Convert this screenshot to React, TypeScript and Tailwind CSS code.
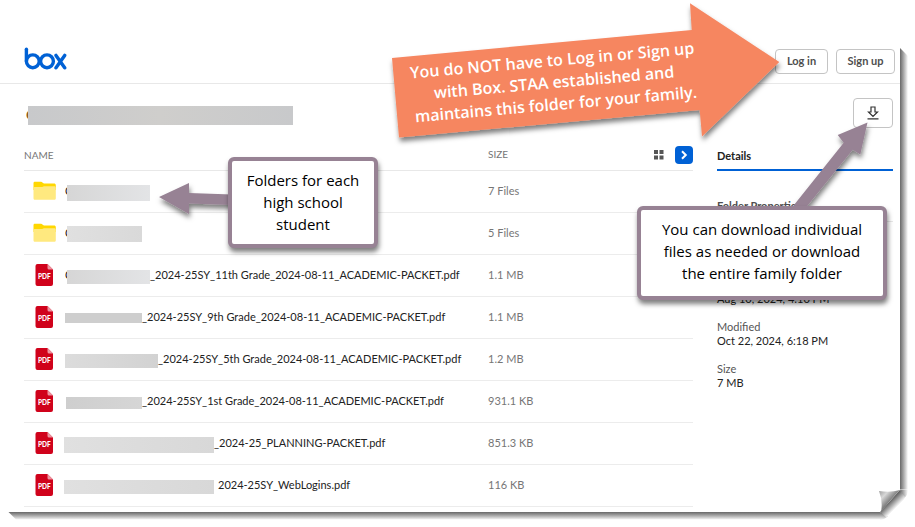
import type { ReactNode } from "react";

type Row = {
  kind: "folder" | "pdf";
  bar: string;
  peek?: boolean;
  label?: string;
  size: string;
};

const rows: Row[] = [
  { kind: "folder", bar: "mt-1 h-4 w-[83px] from-[#d6d6d6] to-[#e3e4e6]", peek: true, size: "7 Files" },
  { kind: "folder", bar: "mt-0.5 h-4 w-[75px] from-[#e0e0e0] to-[#d9d9d9]", peek: true, size: "5 Files" },
  { kind: "pdf", bar: "mt-1 h-3.5 w-[83px] from-[#d6d6d6] to-[#e3e4e6]", peek: true, label: "_2024-25SY_11th Grade_2024-08-11_ACADEMIC-PACKET.pdf", size: "1.1 MB" },
  { kind: "pdf", bar: "ml-px mt-0.5 h-2.5 w-[77px] from-[#cecece] to-[#cecece]", label: "_2024-25SY_9th Grade_2024-08-11_ACADEMIC-PACKET.pdf", size: "1.1 MB" },
  { kind: "pdf", bar: "ml-px mt-1 h-3.5 w-[93px] from-[#dcdcdc] to-[#d2d2d2]", label: "_2024-25SY_5th Grade_2024-08-11_ACADEMIC-PACKET.pdf", size: "1.2 MB" },
  { kind: "pdf", bar: "ml-0.5 mt-1 h-3 w-[76px] from-[#cecece] to-[#d6d6d6]", label: "_2024-25SY_1st Grade_2024-08-11_ACADEMIC-PACKET.pdf", size: "931.1 KB" },
  { kind: "pdf", bar: "mt-1 h-4 w-[150px] from-[#e0e0e0] to-[#d8d8d8]", label: "_2024-25_PLANNING-PACKET.pdf", size: "851.3 KB" },
  { kind: "pdf", bar: "mr-1 mt-1 h-3.5 w-[150px] from-[#e0e0e0] to-[#d8d8d8]", label: "2024-25SY_WebLogins.pdf", size: "116 KB" },
];

function BoxLogo() {
  return (
    <svg width="43" height="24" viewBox="24 47 43 24" fill="none" stroke="#0061d5" strokeWidth="3.4" strokeLinecap="round" aria-label="box">
      <path d="M26.4 49.2V61" />
      <circle cx="32.800" cy="61.300" r="6.400" />
      <circle cx="47" cy="61.300" r="6.400" />
      <path d="M56 55.400L64.700 67.800M64.700 55.400L56 67.800" />
    </svg>
  );
}

function FolderIcon() {
  return (
    <svg width="23" height="20" viewBox="0 0 23 20" aria-label="Folder">
      <path d="M.5 2.200C.5 1.200 1.200.8 2 .8h6c1.300 0 1.500 1.600 3 1.600h10c1.100 0 1.800.7 1.800 1.700V9H.5z" fill="#ffd700" />
      <path d="M.5 7.500c0-.8.5-1.500 1.500-1.500h6.500c1.200 0 1.400-.8 2.500-.8h10c1.100 0 1.800.7 1.800 1.600v10.400c0 .9-.7 1.600-1.600 1.600H2.100C1.200 18.800.5 18.100.5 17.200z" fill="#ffe97f" />
    </svg>
  );
}

function PdfIcon() {
  return (
    <svg width="18" height="22" viewBox="0 0 18 22" aria-label="PDF file">
      <path d="M2.500 0h10l5.500 5.500V20a2 2 0 0 1-2 2H2.500a2 2 0 0 1-2-2V2a2 2 0 0 1 2-2z" fill="#d0021b" />
      <path d="M12.500 0l5.500 5.500H14A1.500 1.500 0 0 1 12.500 4z" fill="#ec93a0" />
      <text x="9.300" y="15.200" textAnchor="middle" fontSize="6.500" fontWeight="900" fill="#fff" fontFamily="Lato, sans-serif">
        PDF
      </text>
    </svg>
  );
}

function Callout({ className, children }: { className: string; children: ReactNode }) {
  return (
    <div
      className={`absolute rounded-md border-4 border-[#978294] bg-white text-center font-['Trebuchet_MS','Open_Sans',sans-serif] text-[15px] leading-[22px] text-black shadow-[1px_4px_5px_rgba(0,0,0,0.5)] ${className}`}
    >
      {children}
    </div>
  );
}

function Listing() {
  return (
    <table className="w-full table-fixed border-collapse text-left text-[11px]">
      <thead>
        <tr className="h-[30px] border-b border-[#e8e8e8] text-[10px] text-[#767676]">
          <th className="w-[464px] p-0 pt-0.5 font-normal">NAME</th>
          <th className="p-0 font-normal">SIZE</th>
          <th className="w-12 p-0">
            <div className="flex items-center justify-end gap-[11px]">
              <button aria-label="Grid view">
                <svg className="block" width="10" height="10" viewBox="0 0 10 10" fill="#555">
                  <rect width="4" height="4" />
                  <rect x="5.500" width="4" height="4" />
                  <rect y="5.500" width="4" height="4" />
                  <rect x="5.500" y="5.500" width="4" height="4" />
                </svg>
              </button>
              <button aria-label="Hide details" className="flex size-[18px] items-center justify-center rounded-sm bg-[#0061d5]">
                <svg width="8" height="10" viewBox="0 0 8 10" fill="none" stroke="#fff" strokeWidth="2">
                  <path d="M2 1.200L5.800 5L2 8.800" />
                </svg>
              </button>
            </div>
          </th>
        </tr>
      </thead>
      <tbody>
        {rows.map((row, i) => (
          <tr key={i} className="h-[42px] border-b border-[#ececec]">
            <td className="p-0">
              <div className="flex items-center whitespace-nowrap text-[#222]">
                <span className="flex w-10 shrink-0 justify-center">{row.kind === "folder" ? <FolderIcon /> : <PdfIcon />}</span>
                {row.peek && <span className="ml-px w-0.5 overflow-hidden">C</span>}
                <span className={`shrink-0 bg-linear-to-r ${row.bar}`} />
                {row.label && <span>{row.label}</span>}
              </div>
            </td>
            <td className="p-0 text-[#767676]" colSpan={2}>
              {row.size}
            </td>
          </tr>
        ))}
      </tbody>
    </table>
  );
}

function Details() {
  return (
    <aside className="w-44 shrink-0 text-[11px] leading-3.5 text-[#222]">
      <h2 className="flex h-[31px] items-center border-b-2 border-[#0061d5] pt-0.5 font-bold">Details</h2>
      <h3 className="mt-7 border-b border-[#e8e8e8] pb-2 font-bold text-[#4e4e4e]">Folder Properties</h3>
      <dl className="mt-[70px]">
        <dd aria-label="Created">Aug 10, 2024, 4:10 PM</dd>
        <dt className="mt-3.5 text-[#555]">Modified</dt>
        <dd>Oct 22, 2024, 6:18 PM</dd>
        <dt className="mt-3.5 text-[#555]">Size</dt>
        <dd>7 MB</dd>
      </dl>
    </aside>
  );
}

export default function App() {
  return (
    <div className="min-h-screen bg-white pr-[15px] pb-[15px] font-[Lato,sans-serif]">
      <div className="relative bg-white pb-[5px]">
        <div className="absolute top-12 -right-2 bottom-[22px] w-2 bg-linear-to-r from-[#686868] to-white [clip-path:polygon(0_0,100%_8px,100%_100%,0_100%)]" />
        <div className="absolute right-5 -bottom-2 left-2 h-2 bg-linear-to-b from-[#686868] to-white [clip-path:polygon(0_0,100%_0,100%_100%,8px_100%)]" />

        <header className="flex h-[84px] items-end justify-between border-b border-[#e8e8e8] pr-[5px] pb-[9px] pl-6">
          <div className="pb-[3px]">
            <BoxLogo />
          </div>
          <div className="flex gap-2 text-[11px] font-bold text-[#4e4e4e]">
            <button className="h-[25px] w-[53px] rounded border border-[#c4c4c4] bg-white">Log in</button>
            <button className="h-[25px] w-[59px] rounded border border-[#c4c4c4] bg-white">Sign up</button>
          </div>
        </header>

        <div className="flex h-14 items-center justify-between pt-0.5 pr-[7px] pl-6">
          <div className="flex items-center pt-1 pl-0.5">
            <span className="w-0.5 overflow-hidden text-sm font-bold text-[#8a5a2a]">C</span>
            <span className="h-[19px] w-[265px] bg-linear-to-r from-[#c8c9cb] via-[#cfcecc] to-[#c8c9cb]" />
          </div>
          <button aria-label="Download" className="flex h-[30px] w-10 items-center justify-center rounded border border-[#c4c4c4] bg-white">
            <svg width="12" height="14" viewBox="0 0 12 14" fill="none" stroke="#333" strokeWidth="1.200">
              <path d="M4 1h4v5h2.500L6 10.500L1.500 6H4zM.5 12.800h11" />
            </svg>
          </button>
        </div>

        <main className="flex gap-6 pr-[7px] pl-6">
          <div className="min-w-0 flex-1">
            <Listing />
          </div>
          <Details />
        </main>

        <svg className="absolute right-0 bottom-0 overflow-visible" width="22" height="22" viewBox="0 0 22 22" aria-hidden="true">
          <defs>
            <linearGradient id="curl" x1="0" y1="0" x2="1" y2="1">
              <stop offset="0" stopColor="#999" />
              <stop offset=".25" stopColor="#d8d8d8" />
              <stop offset=".5" stopColor="#808080" />
            </linearGradient>
            <linearGradient id="curlShade" gradientUnits="userSpaceOnUse" x1="11" y1="11" x2="18" y2="18">
              <stop offset="0" stopColor="#555" />
              <stop offset="1" stopColor="#fff" />
            </linearGradient>
            <linearGradient id="fadeRight" gradientUnits="userSpaceOnUse" x1="22" y1="0" x2="30" y2="0">
              <stop offset="0" stopColor="#686868" />
              <stop offset="1" stopColor="#fff" />
            </linearGradient>
            <linearGradient id="fadeDown" gradientUnits="userSpaceOnUse" x1="0" y1="22" x2="0" y2="30">
              <stop offset="0" stopColor="#686868" />
              <stop offset="1" stopColor="#fff" />
            </linearGradient>
          </defs>
          <path d="M22 0L3 22H22z" fill="#fff" />
          <path d="M22 0L30 0Q30 5 26 8z" fill="url(#fadeRight)" />
          <path d="M2 22V30Q6 30 10 26z" fill="url(#fadeDown)" />
          <path d="M22 0L27 7Q25 14 19 19Q13 25 8 27L2 22z" fill="url(#curlShade)" />
          <path d="M1 1Q12 3 22 0Q13 9 3 22Q5 11 1 1z" fill="url(#curl)" />
        </svg>

        <svg className="pointer-events-none absolute top-0 right-0 overflow-visible" width="900" height="230" viewBox="0 0 900 230" aria-hidden="true">
          <defs>
            <filter id="drop" x="-10%" y="-10%" width="120%" height="130%">
              <feDropShadow dx="1" dy="4" stdDeviation="2.500" floodOpacity=".5" />
            </filter>
          </defs>
          <g filter="url(#drop)">
            <path d="M392 58L691.700 30L690 3.300L779.300 62L702 136.500L699.700 110L399 137.500z" fill="#f68661" />
            <path d="M159 197L189 183V193L232 194.500V205L189 203.500V214z" fill="#978294" />
            <path d="M867.500 122.500L860.300 154.500L852.700 149.700L804 210H790L843.700 142.700L837.700 135z" fill="#978294" />
          </g>
        </svg>
        <p className="absolute top-[49px] right-[196px] w-[300px] -rotate-5 text-center font-['Trebuchet_MS','Open_Sans',sans-serif] text-base leading-[22px] font-semibold text-white">
          You do NOT have to Log in or Sign up
          <br />
          with Box. STAA established and
          <br />
          maintains this folder for your family.
        </p>

        <Callout className="top-[157px] right-[522px] w-[150px] px-2 pt-2 pb-[9px]">Folders for each high school student</Callout>
        <Callout className="top-[206px] right-[13px] w-[250px] px-5 pt-2 pb-3">
          You can download individual files as needed or download the entire family folder
        </Callout>
      </div>
    </div>
  );
}
